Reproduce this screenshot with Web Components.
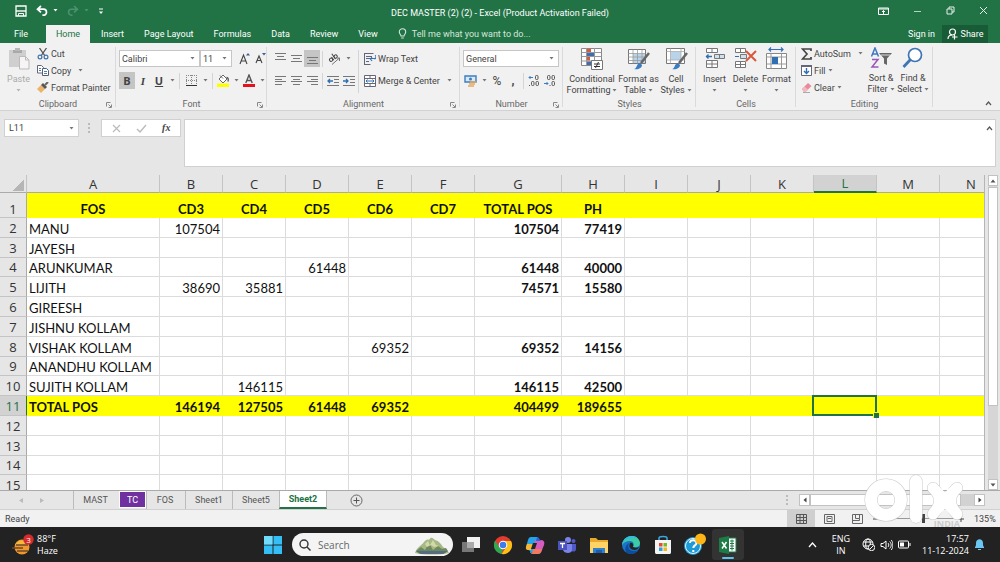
<!DOCTYPE html>
<html lang="en">
<head>
<meta charset="utf-8">
<title>DEC MASTER (2) (2) - Excel</title>
<style>
html,body{margin:0;height:100%}
body{font:9px/12px Roboto,"Open Sans",sans-serif;color:#444;background:#e6e6e6;overflow:hidden}
</style>
</head>
<body>
<excel-app></excel-app>
<script>
const BASE = `
*{box-sizing:border-box}
button,input,select{font:inherit;color:inherit;background:none;border:0;padding:0;margin:0;border-radius:0;outline:0}
button{display:flex;align-items:center;justify-content:center;white-space:nowrap}
select{appearance:none}
a{color:inherit;text-decoration:none}
`;
function define(name, css, html, setup) {
  const t = document.createElement('template');
  t.innerHTML = `<style>${BASE}${css}</style>${html}`;
  customElements.define(name, class extends HTMLElement {
    constructor() {
      super();
      this.attachShadow({mode: 'open'}).append(t.content.cloneNode(true));
    }
    connectedCallback() { if (setup) setup(this, this.shadowRoot); }
  });
}

/* name: [width, height, markup] */
const lines = (ys, a, b) => ys.map((y, i) => `<path d="M${i % 2 ? b : 0} ${y}.5h${i % 2 ? a : 11}" stroke="#777"/>`).join('');
const ICONS = {
  save: [12, 12, '<path d="M1 1h10v10H1z" fill="none" stroke="#fff" stroke-width="1.3"/><path d="M1 6h10" stroke="#fff" stroke-width="1.4"/><path d="M3.5 11V8.5h5V11" fill="none" stroke="#fff"/>'],
  undo: [12, 11, '<path d="M5 1L1.5 4.2 5 7.4M2 4.2h5.5a2.9 2.9 0 0 1 0 6H6.4" fill="none" stroke="#fff" stroke-width="1.7"/>'],
  redo: [12, 11, '<path d="M7 1l3.5 3.2L7 7.4M10 4.2H4.5a2.9 2.9 0 0 0 0 6h1" fill="none" stroke="#4d9270" stroke-width="1.5"/>'],
  custom: [6, 8, '<path d="M1 2h4" stroke="#fff"/><path d="M1 4.5h4L3 7z" fill="#fff"/>'],
  arrow: [5, 3, '<path d="M.5 0h4L2.500 2.500z" fill="#777"/>'],
  arrowPale: [5, 3, '<path d="M.5 0h4L2.500 2.500z" fill="#b5b5b5"/>'],
  arrowWhite: [5, 3, '<path d="M.5 0h4L2.500 2.500z" fill="#fff"/>'],
  arrowDim: [5, 3, '<path d="M.5 0h4L2.500 2.500z" fill="#4d9270"/>'],
  display: [11, 8, '<path d="M.5 1h10v6.500H.5zM.5 2h10M5.500 7V3.500M4 5l1.500-1.500L7 5" fill="none" stroke="#fff"/>'],
  min: [9, 8, '<path d="M1 4.500h7" stroke="#b5d3c2"/>'],
  restore: [9, 9, '<path d="M1 3h5v5H1zM3 3V1h5v5H6" fill="none" stroke="#e5f0ea"/>'],
  close: [9, 9, '<path d="M1 1l7 7M8 1L1 8" stroke="#e5f0ea"/>'],
  bulb: [9, 12, '<path d="M3 8C3 6.800 1.300 6 1.300 4a3.200 3.200 0 0 1 6.400 0C7.700 6 6 6.800 6 8zM3.200 10h2.600" fill="none" stroke="#d5e6dc" stroke-width="1.100"/>'],
  person: [11, 12, '<circle cx="5.500" cy="4" r="3" fill="none" stroke="#fff" stroke-width="1.200"/><path d="M1 11c0-3 2-4 4-4M7.500 6.500v5M5 9h5.500" fill="none" stroke="#fff" stroke-width="1.200"/>'],
  paste: [22, 23, '<path d="M1 3h17v17H1z" fill="#cfcfcf"/><path d="M5 3h9v3H5z" fill="#a9a9a9"/><path d="M7 1h5v3H7z" fill="#b9b9b9"/><path d="M11.500 9.500h6l3.500 3.500v9h-9.500z" fill="#f6f4f4" stroke="#bbb"/><path d="M17.500 9.500V13H21" fill="none" stroke="#bbb"/>'],
  cut: [12, 12, '<path d="M2.500 0L8 8M9.500 0L4 8" stroke="#555" stroke-width="1.300"/><circle cx="3" cy="9" r="1.900" fill="none" stroke="#4274b0" stroke-width="1.200"/><circle cx="9" cy="9" r="1.900" fill="none" stroke="#4274b0" stroke-width="1.200"/>'],
  copy: [12, 11, '<path d="M.5.5h4L6.500 2.500V8H.5z" fill="#fff" stroke="#667"/><path d="M5.500 3.500h4l2 2v5h-6z" fill="#fff" stroke="#555c77"/><path d="M7 6.500h3M7 8.500h3M2 3.500h2M2 5.500h2" stroke="#4a7ebb"/>'],
  painter: [12, 11, '<path d="M0 7l4-4 4 4-4 4z" fill="#edb469"/><path d="M4 3l2-2 4 4-2 2z" fill="#555"/><path d="M8 3l3-3" stroke="#666" stroke-width="2"/>'],
  launcher: [6, 6, '<path d="M.5 4.500v-4h4M2.500 2.500L5 5M5.500 2.500v3h-3" fill="none" stroke="#888"/>'],
  bigger: [11, 12, '<path d="M1 11L4.500 2 8 11M2.300 8h4.400" fill="none" stroke="#444" stroke-width="1.100"/><path d="M7 2.500h4L9 0z" fill="#3c5f8f"/>'],
  smaller: [11, 11, '<path d="M1 10l3-7 3 7M2.300 7.500h3.400" fill="none" stroke="#444" stroke-width="1.100"/><path d="M7 0h4L9 2.500z" fill="#3c5f8f"/>'],
  borders: [11, 11, '<path d="M.5 0v10M5.500 0v10M10.500 0v10M0 .5h11M0 5.500h11" stroke="#888" stroke-dasharray="1 1"/><path d="M0 10.500h11" stroke="#333"/>'],
  fill: [13, 13, '<path d="M2 5l4-4 4 4-4 4z" fill="#fff" stroke="#666"/><path d="M3 1.500l3 3" stroke="#666"/><path d="M9.500 3.500c2 0 2 2 1.500 4" stroke="#555" stroke-width="1.300" fill="none"/><path d="M0 9.500h12V13H0z" fill="#ff0"/>'],
  fontColor: [12, 13, '<path d="M2.800 9L6 1l3.200 8M3.800 6.500h4.400" fill="none" stroke="#555" stroke-width="1.400"/><path d="M0 10h12v3H0z" fill="#e8101c"/>'],
  top: [11, 11, lines([0, 3, 6], 7, 2)],
  mid: [11, 9, lines([1, 4, 7], 7, 2)],
  bottom: [11, 11, lines([4, 7, 10], 7, 2)],
  alignLeft: [11, 9, lines([0, 3, 5, 8], 7, 0)],
  alignCenter: [11, 9, lines([0, 3, 5, 8], 7, 2)],
  alignRight: [11, 9, lines([0, 3, 5, 8], 7, 4)],
  orient: [13, 12, '<g transform="rotate(-35 5 6)" fill="none" stroke="#444"><circle cx="3" cy="5.500" r="1.600"/><path d="M5 3.500v4M7 1v6.500"/><circle cx="8.600" cy="5.500" r="1.600"/></g><path d="M4 11.500L11.500 5M11.500 8V5H8.500" stroke="#777" fill="none"/>'],
  outdent: [12, 10, '<path d="M0 .5h12M7 3.500h5M7 6.500h5M0 9.500h12" stroke="#777"/><path d="M6 5H1M3 3L1 5l2 2" fill="none" stroke="#2f6fb3" stroke-width="1.300"/>'],
  indent: [12, 10, '<path d="M0 .5h12M7 3.500h5M7 6.500h5M0 9.500h12" stroke="#777"/><path d="M0 5h5M3 3l2 2-2 2" fill="none" stroke="#2f6fb3" stroke-width="1.300"/>'],
  wrap: [12, 12, '<path d="M.5 0v12M.5.5h9M.5 11.500h6M2 3.500h6M2 8.500h3" fill="none" stroke="#667"/><path d="M2 5.500h8a1.500 1.500 0 0 0 1-3M8 4L6.500 6 8 8" fill="none" stroke="#3c6fb0" stroke-width="1.200"/>'],
  merge: [12, 12, '<path d="M.5.5h11v11H.5zM.5 3.500h11M.5 8.500h11M6 .5v3M6 8.500v3" fill="#fff" stroke="#667"/><path d="M2 6h8M3.500 4.500L2 6l1.500 1.500M8.500 4.500L10 6 8.500 7.500" fill="none" stroke="#2f6fb3"/>'],
  money: [14, 12, '<path d="M1 1h11v6H1z" fill="#d8e8f5" stroke="#3b7dc0" stroke-width="1.400"/><circle cx="6.500" cy="4" r="1.500" fill="#3b7dc0"/><path d="M6 7h6M5 9h6M4 11h6" stroke="#e8a860" stroke-width="1.500"/>'],
  incDec: [12, 12, '<path d="M5 2.500H1M2.500 1L1 2.500 2.500 4" fill="none" stroke="#3b7dc0"/><g fill="none" stroke="#555"><rect x="7.500" y=".5" width="2.500" height="4" rx="1"/><rect x="3.500" y="6.500" width="2.500" height="4" rx="1"/><rect x="8" y="6.500" width="2.500" height="4" rx="1"/></g><path d="M1 10.500h1" stroke="#555"/>'],
  decDec: [12, 12, '<path d="M0 8.500h4M2.500 7L4 8.500 2.500 10" fill="none" stroke="#3b7dc0"/><g fill="none" stroke="#555"><rect x="3.500" y=".5" width="2.500" height="4" rx="1"/><rect x="8" y=".5" width="2.500" height="4" rx="1"/><rect x="8" y="6.500" width="2.500" height="4" rx="1"/></g><path d="M5.500 10.500h1" stroke="#555"/>'],
  cond: [22, 23, '<path d="M.5 1.500h20v17H.5z" fill="#fff" stroke="#888"/><path d="M.5 5.500h20M.5 9.500h20M.5 14h20M5.500 1v17M13.500 1v17" stroke="#999"/><path d="M6 2h4v3H6zM6 10h3v3.500H6z" fill="#d9593d"/><path d="M6 6h7v3H6zM6 14.500h5v3.500H6z" fill="#3c6fb0"/><path d="M10.500 13.500h11v9h-11z" fill="#fff" stroke="#777"/><path d="M13 17h6M13 19.500h6M17.500 15l-3 6" stroke="#333"/>'],
  formatTable: [23, 23, '<path d="M1.500 2.500h17v14h-17z" fill="#fff" stroke="#777"/><path d="M6 7h12v9H6z" fill="#b9d4ea"/><path d="M1.500 6.500h17M1.500 10h17M1.500 13.500h17M6 2.500v14M10.500 2.500v14M15 2.500v14" stroke="#999" stroke-width=".8"/><path d="M22 6l-8 10" stroke="#666" stroke-width="2.500"/><path d="M7 22c3 0 2-5 6-6l2 2c0 3-4 5-8 4z" fill="#3b7dc0"/>'],
  cellStyles: [23, 23, '<path d="M1.500 1.500h18v15h-18z" fill="#fff" stroke="#777"/><path d="M6 5h10v8H6z" fill="#b9d4ea"/><path d="M1.500 4.500h18M1.500 13h18M5.500 1.500v15M16 1.500v15" stroke="#aaa" stroke-width=".8"/><path d="M22 6l-8 10" stroke="#666" stroke-width="2.500"/><path d="M7 22c3 0 2-5 6-6l2 2c0 3-4 5-8 4z" fill="#3b7dc0"/>'],
  insertCells: [20, 23, '<path d="M1.500 1.500h11v4h-11zM7 1.500v4M1.500 13.500h11v7h-11zM1.500 17h11M7 13.500v7" fill="#fff" stroke="#777"/><path d="M9.500 7.500h10v4h-10zM14.500 7.500v4" fill="#cfe0ee" stroke="#777"/><path d="M7 9.500H1M3.500 7.500l-2 2 2 2" fill="none" stroke="#2f6fb3" stroke-width="1.400"/>'],
  deleteCells: [23, 23, '<path d="M1.500 1.500h10v4h-10zM6.500 1.500v4M1.500 14.500h10v6h-10zM1.500 17.500h10M6.500 14.500v6" fill="#fff" stroke="#777"/><path d="M6.500 7.500h6v4h-6z" fill="#cfe0ee" stroke="#777"/><path d="M5 9.500H1" stroke="#2f6fb3"/><path d="M12 4l10 10M22 4L12 14" stroke="#d9593d" stroke-width="2"/>'],
  formatCells: [23, 23, '<path d="M4 2.500h14M6 .500L4 2.500l2 2M16 .500l2 2-2 2" fill="none" stroke="#2f6fb3" stroke-width="1.200"/><path d="M1.500 6.500h20v15h-20z" fill="#fff" stroke="#888"/><path d="M1.500 10h20M1.500 17h20M6 6.500v15M16.500 6.500v15" stroke="#999"/><path d="M7 10h6v7H7z" fill="#2f6fb3"/>'],
  sum: [11, 12, '<path d="M10 3V1H1.500L6 6l-4.500 5H10V9" fill="none" stroke="#444" stroke-width="1.700"/>'],
  fillDown: [11, 11, '<path d="M.5.5h10v10H.5z" fill="#fff" stroke="#667"/><path d="M0 0h11v2H0z" fill="#667"/><path d="M5.500 3v5.500M3 6l2.500 2.500L8 6" fill="none" stroke="#2f6fb3" stroke-width="1.400"/>'],
  eraser: [11, 11, '<path d="M1 7l6-6 3.500 3L5 9.500H2.500z" fill="#e98a9a"/><path d="M1 7l2.500-2.500L7 7.500 5 9.500H2.500z" fill="#f3b7c0"/><path d="M2 10.500h7" stroke="#aaa"/>'],
  sort: [22, 22, '<path d="M1.500 9.500L5 1l3.500 8.500M2.700 7h4.600" fill="none" stroke="#3c78bf" stroke-width="1.500"/><path d="M2 12.500h6L2 20h6.500" fill="none" stroke="#9a55b8" stroke-width="1.500"/><path d="M9 6h13l-5 5.500V18l-3-1.500v-5z" fill="#666"/><path d="M11 8h9" stroke="#ddd"/>'],
  find: [22, 22, '<circle cx="13" cy="8" r="6.500" fill="#fff" stroke="#3f74b5" stroke-width="1.700"/><path d="M8.500 12.500L1.500 20" stroke="#3f74b5" stroke-width="2.800"/>'],
  up: [7, 5, '<path d="M1 4l2.500-3L6 4" fill="none" stroke="#555" stroke-width="1.200"/>'],
  cancel: [9, 9, '<path d="M1 1l7 7M8 1L1 8" stroke="#bbb" stroke-width="1.200"/>'],
  check: [11, 9, '<path d="M1 5l3 3 6-7" fill="none" stroke="#bbb" stroke-width="1.400"/>'],
  dots: [2, 10, '<path d="M0 0h2v2H0zM0 4h2v2H0zM0 8h2v2H0z" fill="#bbb"/>'],
  prev: [4, 5, '<path d="M4 0v5L0 2.500z" fill="#bbb"/>'],
  next: [4, 5, '<path d="M0 0v5l4-2.500z" fill="#bbb"/>'],
  sLeft: [4, 6, '<path d="M3.500 .5v5L.5 3z" fill="#444"/>'],
  sRight: [4, 6, '<path d="M.5 .5v5l3-2.500z" fill="#444"/>'],
  sUp: [6, 4, '<path d="M.5 3.500h5L3 .5z" fill="#555"/>'],
  sDown: [6, 4, '<path d="M.5 .5h5L3 3.500z" fill="#555"/>'],
  plus: [13, 13, '<circle cx="6.500" cy="6.500" r="5.500" fill="none" stroke="#666"/><path d="M6.500 3.500v6M3.500 6.500h6" stroke="#555"/>'],
  viewNormal: [11, 10, '<path d="M.5.5h10v9H.5zM.5 3.500h10M.5 6.500h10M4 .5v9M7.500.5v9" fill="none" stroke="#555"/>'],
  viewPage: [11, 10, '<path d="M.5.5h10v9H.5zM3 2.500h5v5H3zM4 4.500h3" fill="none" stroke="#666"/>'],
  viewBreak: [11, 10, '<path d="M.5.5h10v9H.5zM3.500.5v4h4v-4M.5 6.500h7v-2" fill="none" stroke="#666"/>'],
  weather: [22, 22, '<circle cx="10" cy="13" r="7.500" fill="#f0982d"/><path d="M3 11c3-6 11-6 14 0" fill="#f7b93c"/><path d="M0 14h11M4 11h12M5 17h11" stroke="#6b4a2a" stroke-width="1.300"/><circle cx="16.500" cy="5.500" r="5.200" fill="#d42c2c"/><text x="16.500" y="8.500" font-size="8" fill="#fff" text-anchor="middle">3</text>'],
  windows: [18, 18, '<path d="M0 0h8.500v8.500H0zM9.500 0H18v8.500H9.500zM0 9.500h8.500V18H0zM9.500 9.500H18V18H9.500z" fill="#35bdf5"/><path d="M0 0h8.500v8.500H0z" fill="#6fdcfb"/>'],
  search: [12, 12, '<circle cx="5" cy="5" r="4" fill="none" stroke="#333" stroke-width="1.400"/><path d="M8 8l3.500 3.500" stroke="#333" stroke-width="1.400"/>'],
  hill: [36, 20, '<path d="M1 18C3 12 7 11 10 7c2-2 3-3 5-2 2-4 4-2 6 0 4 1 6 4 8 7 3 2 5 4 6 6-9 2-25 2-34 0z" fill="#a5b886"/><path d="M2 16l5-4 4 3 4-7 4 7 5-4 4 3 4-1 2 3-5 3H6z" fill="#6c8a5e"/><path d="M11 9l3-3 2 4 3-5 3 5 3 1-5 1-3-2-4 2z" fill="#d3d9a6"/><path d="M2 16h32l-5 3H7z" fill="#566a80"/>'],
  taskview: [20, 20, '<path d="M1 7h12v10H1z" fill="#777"/><path d="M6 2h13v11H6z" fill="#f1f1f1"/><path d="M6 7h7v6H6z" fill="#aaa"/>'],
  chrome: [20, 20, '<circle cx="10" cy="10" r="9" fill="#e33b2e"/><path d="M2.200 5.500L6.100 12.200 10 14.500 8.500 19A9 9 0 0 1 2.200 5.500z" fill="#2da94f"/><path d="M10 6h8a9 9 0 0 1-9.500 13l5-7z" fill="#fbc116"/><circle cx="10" cy="10" r="4.300" fill="#fff"/><circle cx="10" cy="10" r="3.300" fill="#3b7ded"/>'],
  copilot: [20, 20, '<path d="M6 2h7l-4 13c-1 3-3 3-4 3 2-4-5-2-4-6l2-7c.5-2 1.500-3 3-3z" fill="#25a5e8"/><path d="M2 9l-1 3c-1 4 4 3 5 3l2-6z" fill="#f5b638"/><path d="M10 5h5c4 0 5 2 4 5l-2 5c-1 3-2 4-4 4H6c3-1 3-3 4-6z" fill="#d65cc0"/><path d="M12 2c3 0 2 4 5 4h-6z" fill="#2467d8"/><path d="M8 14h9c-1 4-2 5-5 5H6c1-1 2-3 2-5z" fill="#f17a5c"/><path d="M8 8h4l-2 6H6z" fill="#242424"/>'],
  teams: [20, 20, '<circle cx="11" cy="5" r="3" fill="#7b83eb"/><circle cx="16.500" cy="6" r="2" fill="#5059c9"/><path d="M13 9h6v5c0 3-3 3-5 2z" fill="#5059c9"/><path d="M6 9h9v6c0 4-8 4-9 0z" fill="#7b83eb"/><path d="M1 6h9v9H1z" fill="#4b53bc"/><path d="M3 8.500h5M5.500 8.500V13" stroke="#fff" stroke-width="1.300"/>'],
  folder: [20, 20, '<path d="M1 3h6l2 2h10v13H1z" fill="#e9a92b"/><path d="M1 7h18v11H1z" fill="#fcd364"/><path d="M4 13h12v5H4z" fill="#2f7fd0"/><path d="M7 15h6v3H7z" fill="#1b5faa"/>'],
  edge: [20, 20, '<circle cx="10" cy="10" r="9" fill="#1b74c9"/><path d="M1 10C2 3 7 1 11 1c5 0 8 4 8 7 0 4-4 5-7 4 2-3 0-6-3-6-4 0-7 2-8 4z" fill="#3ccba3"/><path d="M1 10C2 4 7 1 11 1c3 0 5 1 6 3C12 2 4 3 1 10z" fill="#35b9e6"/><path d="M8 8c-2 4 0 8 5 8 2 0 4-1 5-2-3 5-8 6-12 4-3-2-2-8 2-10z" fill="#0d4c9b"/><path d="M9 8c2-1 4 1 3 4 2 1 4 1 6 0-1 3-5 4-8 2-2-1-2-4-1-6z" fill="#242424"/>'],
  store: [20, 20, '<path d="M6 5V3c0-2 8-2 8 0v2" fill="none" stroke="#3aa9e0" stroke-width="1.500"/><path d="M2 5h16v12c0 2-1 2-2 2H4c-1 0-2 0-2-2z" fill="#f4f4f4"/><path d="M6 8h3.500v3.500H6z" fill="#e64b2d"/><path d="M10.500 8H14v3.500h-3.500z" fill="#79b928"/><path d="M6 12.500h3.500V16H6z" fill="#2c9fe3"/><path d="M10.500 12.500H14V16h-3.500z" fill="#f5b71c"/>'],
  help: [24, 24, '<circle cx="10" cy="13" r="9" fill="#1d9bd6"/><circle cx="10" cy="13" r="7.500" fill="none" stroke="#e5f4fb"/><path d="M7 10c0-4 6.500-3.500 6.500 0 0 2.500-3.200 2.300-3.200 5M10.300 17v2" fill="none" stroke="#fff" stroke-width="2"/><circle cx="17.500" cy="6" r="5.500" fill="#fcb516"/>'],
  excel: [20, 20, '<path d="M9 3h9v14H9z" fill="#fff" stroke="#1d7c45"/><path d="M12 6h4M12 8.500h4M12 11h4M12 13.500h4M14 4.500v11" stroke="#1d7c45"/><path d="M1 3l10-2v18L1 17z" fill="#1d7c45"/><path d="M4 7l4.500 6.500M8.500 7L4 13.500" stroke="#fff" stroke-width="1.500"/>'],
  chevron: [9, 6, '<path d="M1 5l3.500-4L8 5" fill="none" stroke="#fff" stroke-width="1.300"/>'],
  globe: [13, 13, '<circle cx="6" cy="6" r="5" fill="none" stroke="#fff"/><ellipse cx="6" cy="6" rx="2.300" ry="5" fill="none" stroke="#fff"/><path d="M1.500 4h9M1.500 8h9" stroke="#fff"/><circle cx="9.500" cy="9.500" r="3.200" fill="#242424" stroke="#fff"/><path d="M7.500 11.500l4-4" stroke="#fff"/>'],
  speaker: [13, 12, '<path d="M1 4.500h2L6 2v8L3 7.500H1z" fill="none" stroke="#fff"/><path d="M8 4c1 1 1 3 0 4M9.700 2.500c2 2 2 5 0 7M11.300 1c2 3 2 7 0 10" fill="none" stroke="#fff" stroke-width=".9"/>'],
  battery: [13, 9, '<rect x=".5" y="1" width="10" height="7" rx="1" fill="none" stroke="#fff"/><path d="M2 2.500h4v4H2zM11.500 3h1v3h-1z" fill="#fff"/>'],
  bell: [11, 13, '<path d="M1 9c1-1 1-2 1-4 0-5 7-5 7 0 0 2 0 3 1 4v1H1z" fill="#6cc6f2"/><path d="M4 11h3v1H4z" fill="#6cc6f2"/>'],
  olx: [102, 54, '<g fill="none" stroke-linecap="round"><g stroke="#c8c8c8" stroke-width="13"><circle cx="22" cy="26" r="15"/><path d="M52 7v36"/><path d="M69 14Q82 26 69 40M93 14Q80 26 93 40" stroke-width="12"/></g><g stroke="#fff"><circle cx="22" cy="26" r="15" stroke-width="12"/><path d="M52 7v36" stroke-width="12"/><path d="M69 14Q82 27 93 40M93 14Q80 27 69 40M69 14Q82 26 69 40M93 14Q80 26 93 40" stroke-width="11"/></g></g>'],
};
customElements.define('x-icon', class extends HTMLElement {
  connectedCallback() {
    if (this.shadowRoot) return;
    const [w, h, m] = ICONS[this.getAttribute('name')];
    this.attachShadow({mode: 'open'}).innerHTML =
      `<style>:host{display:block;flex:none;width:${w}px;height:${h}px}svg{display:block}</style><svg width="${w}" height="${h}" viewBox="0 0 ${w} ${h}" aria-hidden="true">${m}</svg>`;
  }
});
const ic = n => `<x-icon name="${n}"></x-icon>`;

define('title-bar', `
:host{display:grid;grid-template-columns:1fr auto 1fr;align-items:center;height:25px;background:#217346;color:#fff}
.l,.r{display:flex;align-items:center;height:21px;align-self:start}
.l{gap:5px;padding-left:15px}.l .n{margin-left:4px}
.r{justify-content:flex-end;gap:24px;padding-right:12px}
`, `<div class="l"><button aria-label="Save">${ic('save')}</button><button class="n" aria-label="Undo">${ic('undo')}</button>${ic('arrowWhite')}<button class="n" aria-label="Redo">${ic('redo')}</button>${ic('arrowDim')}<button class="n" aria-label="Customize">${ic('custom')}</button></div>
<span>DEC MASTER (2) (2) - Excel (Product Activation Failed)</span>
<div class="r"><button aria-label="Ribbon display">${ic('display')}</button><button aria-label="Minimize">${ic('min')}</button><button aria-label="Restore">${ic('restore')}</button><button aria-label="Close">${ic('close')}</button></div>`);

define('ribbon-tabs', `
:host{display:flex;height:18px;background:#217346;color:#fff;align-items:stretch}
button{padding:0 10px}
.file{width:42px;margin-right:4px}
.on{background:#f1f1f1;color:#217346;width:44px;padding:0}
.home{margin-right:1px}
.tell{gap:5px;color:#d5e6dc}
.sign{margin-left:auto;padding:0 7px}
.share{background:#185c37;gap:3px;width:46px;padding:0;margin-right:12px}
`, `<button class="file">File</button><button class="on home">Home</button><button>Insert</button><button>Page Layout</button><button>Formulas</button><button>Data</button><button>Review</button><button>View</button><button class="tell">${ic('bulb')}Tell me what you want to do...</button><button class="sign">Sign in</button><button class="share">${ic('person')}Share</button>`);

define('ribbon-group', `
:host{display:flex;flex-direction:column;flex:none;margin-top:2px;padding:0 3px;background:linear-gradient(#dadada,#dadada) right 2px/1px 60px no-repeat}
.b{height:52px;display:flex}
.f{display:flex;height:13px;align-items:center;justify-content:center;position:relative;color:#666}
.f x-icon{position:absolute;right:1px;bottom:2px}
:host([plain]) .f x-icon{display:none}
`, `<div class="b"><slot></slot></div><div class="f"><span></span>${ic('launcher')}</div>`,
(el, r) => { r.querySelector('span').textContent = el.getAttribute('label'); });

define('big-button', `
:host{display:block}
button{flex-direction:column;justify-content:flex-start;width:100%;line-height:11px;gap:4px;padding-top:2px}
.t{display:flex;flex-direction:column;align-items:center}
.t span{display:flex;align-items:center;gap:2px;height:11px}
`, `<button><slot name="icon"></slot><span class="t"><span class="a"></span><span class="c"></span></span></button>`,
(el, r) => {
  r.querySelector('.a').textContent = el.getAttribute('first');
  r.querySelector('.c').innerHTML = (el.getAttribute('second') || '') + ic(el.hasAttribute('pale') ? 'arrowPale' : 'arrow');
});
const big = (n, a, b, w, extra = '') => `<big-button style="width:${w}px" first="${a}" ${b ? `second="${b}"` : ''} ${extra}><x-icon slot="icon" name="${n}"></x-icon></big-button>`;

define('ribbon-bar', `
:host{display:flex;height:68px;background:#f1f1f1;border-bottom:1px solid #d2d2d2}
ribbon-group.clip{width:116px}.font{width:151px}.align{width:193px}.num{width:103px}.styles{width:133px}.cells{width:100px}.edit{width:137px}
.stack{display:flex;flex-direction:column}
.stack button{height:17px;gap:2px;justify-content:flex-start}
.rows{display:flex;flex-direction:column;gap:5px;padding-top:5px}
.row{display:flex;align-items:center;height:17px}
.row button,.i{width:16px;height:17px}
.row .a{width:10px;display:flex;justify-content:center}
.row .s{width:1px;height:16px;background:#d4d4d4;margin:0 2px}
.row .txt{width:auto;gap:2px}
.row .biu{font-size:11px;font-family:"Open Sans",sans-serif}
.row .serif{font-family:"Liberation Serif",serif}
.dark{background:#c5c5c5}
label{display:grid;align-items:center;border:1px solid #c6c6c6;background:#fff;height:17px}
label>*{grid-area:1/1}label select{padding-left:2px;width:100%}
label x-icon{justify-self:end;margin-right:4px}
.fn{width:81px}.fs{width:32px;margin-right:4px}.nf{width:96px}
.row .z{width:18px}
.pale{color:#aaa}
.v{width:1px;background:#d4d4d4;margin:5px 5px 4px auto}
.pct{font-size:12px}
.collapse{margin:auto 8px 4px auto}
`, `
<ribbon-group class="clip" label="Clipboard">${big('paste', 'Paste', '', 31, 'pale class="pale"')}
<div class="stack" style="padding-left:3px"><button>${ic('cut')}Cut</button><button>${ic('copy')}Copy<x-icon name="arrow" style="margin-left:5px"></x-icon></button><button>${ic('painter')}Format Painter</button></div></ribbon-group>
<ribbon-group class="font" label="Font"><div class="rows">
<div class="row"><label class="fn"><select aria-label="Font"><option>Calibri</option></select>${ic('arrow')}</label><label class="fs"><select aria-label="Font size"><option>11</option></select>${ic('arrow')}</label><button aria-label="Increase font size">${ic('bigger')}</button><button aria-label="Decrease font size">${ic('smaller')}</button></div>
<div class="row"><button class="dark biu"><b>B</b></button><button class="biu serif"><b><i>I</i></b></button><button class="biu"><b><u>U</u></b></button><span class="a">${ic('arrow')}</span><span class="s"></span><button class="z" aria-label="Borders">${ic('borders')}</button><span class="a">${ic('arrow')}</span><span class="s"></span><button aria-label="Fill color">${ic('fill')}</button><span class="a">${ic('arrow')}</span><button aria-label="Font color">${ic('fontColor')}</button><span class="a">${ic('arrow')}</span></div>
</div></ribbon-group>
<ribbon-group class="align" label="Alignment"><div class="rows" style="padding-left:2px">
<div class="row"><button aria-label="Top">${ic('top')}</button><button aria-label="Middle">${ic('mid')}</button><button class="dark" aria-label="Bottom">${ic('bottom')}</button><span class="s"></span><button class="z" aria-label="Orientation">${ic('orient')}</button><span class="a">${ic('arrow')}</span></div>
<div class="row"><button aria-label="Left">${ic('alignLeft')}</button><button aria-label="Center">${ic('alignCenter')}</button><button aria-label="Right">${ic('alignRight')}</button><span class="s"></span><button aria-label="Decrease indent">${ic('outdent')}</button><button aria-label="Increase indent">${ic('indent')}</button></div></div>
<span class="v"></span><div class="rows" style="width:93px"><div class="row"><button class="txt">${ic('wrap')}Wrap Text</button></div><div class="row"><button class="txt">${ic('merge')}Merge &amp; Center<x-icon name="arrow" style="margin-left:5px"></x-icon></button></div></div></ribbon-group>
<ribbon-group class="num" label="Number"><div class="rows"><div class="row"><label class="nf"><select aria-label="Number format"><option>General</option></select>${ic('arrow')}</label></div>
<div class="row"><button aria-label="Accounting">${ic('money')}</button><span class="a">${ic('arrow')}</span><button class="pct">%</button><button class="pct"><b>,</b></button><span class="s"></span><button aria-label="Increase decimal">${ic('incDec')}</button><button aria-label="Decrease decimal">${ic('decDec')}</button></div></div></ribbon-group>
<ribbon-group class="styles" label="Styles" plain>${big('cond', 'Conditional', 'Formatting', 52)}${big('formatTable', 'Format as', 'Table', 41)}${big('cellStyles', 'Cell', 'Styles', 34)}</ribbon-group>
<ribbon-group class="cells" label="Cells" plain>${big('insertCells', 'Insert', '', 31)}${big('deleteCells', 'Delete', '', 31)}${big('formatCells', 'Format', '', 31)}</ribbon-group>
<ribbon-group class="edit" label="Editing" plain><div class="stack" style="width:66px;padding-left:2px"><button>${ic('sum')}AutoSum<x-icon name="arrow" style="margin-left:5px"></x-icon></button><button>${ic('fillDown')}Fill${ic('arrow')}</button><button>${ic('eraser')}Clear${ic('arrow')}</button></div>${big('sort', 'Sort &amp;', 'Filter', 32)}${big('find', 'Find &amp;', 'Select', 32)}</ribbon-group>
<button class="collapse" aria-label="Collapse ribbon">${ic('up')}</button>`);

define('formula-bar', `
:host{display:flex;align-items:flex-start;height:64px;padding:8px 4px 0;background:#e6e6e6}
.name,.fx{display:flex;align-items:center;height:18px;background:#fff;border:1px solid #d0d0d0}
.name{width:75px;padding:0 4px}.name input{flex:1;min-width:0}
.d{margin:4px 11px 0 9px}
.fx{width:80px;justify-content:space-around;padding:0 2px}
.fx i{font:italic bold 10px/14px "Liberation Serif",serif;color:#444}
.box{flex:1;display:flex;height:48px;margin-left:3px;background:#fff;border:1px solid #d0d0d0}
.box input{flex:1;height:17px}.box x-icon{margin:6px 2px}
`, `<div class="name"><input aria-label="Name box" value="L11">${ic('arrow')}</div><x-icon class="d" name="dots"></x-icon><div class="fx"><button aria-label="Cancel">${ic('cancel')}</button><button aria-label="Enter">${ic('check')}</button><button aria-label="Insert function"><i>fx</i></button></div><div class="box"><input aria-label="Formula">${ic('up')}</div>`);

const COLS = {A: 133, B: 63, C: 63, D: 63, E: 63, F: 63, G: 87, H: 63, I: 63, J: 63, K: 63, L: 63, M: 63, N: 63};
const DATA = [
  ['FOS', 'CD3', 'CD4', 'CD5', 'CD6', 'CD7', 'TOTAL POS', 'PH'],
  ['MANU', 107504, '', '', '', '', 107504, 77419],
  ['JAYESH'],
  ['ARUNKUMAR', '', '', 61448, '', '', 61448, 40000],
  ['LIJITH', 38690, 35881, '', '', '', 74571, 15580],
  ['GIREESH'],
  ['JISHNU KOLLAM'],
  ['VISHAK KOLLAM', '', '', '', 69352, '', 69352, 14156],
  ['ANANDHU KOLLAM'],
  ['SUJITH KOLLAM', '', 146115, '', '', '', 146115, 42500],
  ['TOTAL POS', 146194, 127505, 61448, 69352, '', 404499, 189655],
  [], [], [], []
];
define('sheet-grid', `
:host{display:block;overflow:hidden;background:#fff;border-right:1px solid #b5b5b5}
table{border-collapse:separate;border-spacing:0;table-layout:fixed;width:1003px;color:#111}
td,th{border:solid #dcdcdc;border-width:0 1px 1px 0;white-space:nowrap;overflow:hidden}
tr{height:20px}
tbody tr:nth-child(5n+4){height:19px}
tbody tr.head{height:25px}
td{padding:2px 2px 0;font:13px/16px Lato,sans-serif;text-align:right}
td:first-of-type{text-align:left}
th{font:13px/16px "Open Sans",sans-serif;text-align:center;background:#e6e6e6;color:#333;padding:0;border-color:#c4c4c4}
thead tr{height:18px}
thead th{border-bottom-color:#aaa}
thead th.sel{background:#d2d2d2;color:#217346;border-bottom:2px solid #217346;line-height:15px}
tbody th{border-right-color:#aaa}
tr.total th{background:#d2d2d2;color:#217346;border-right-color:#217346}
td:nth-of-type(7),td:nth-of-type(8){font-weight:700}
tr.head td,tr.total td{font-weight:700;background:#ff0;border-color:#ff0}
tr.head td{text-align:center;vertical-align:bottom}
tr.head th{vertical-align:bottom}
tr.total td.sel{position:relative;overflow:visible;border:0}
td.sel::before{content:"";position:absolute;inset:-1px 0 0 -2px;border:2px solid #217346}
td.sel::after{content:"";position:absolute;right:-2px;bottom:-2px;width:5px;height:5px;background:#217346;border:solid #ff0;border-width:1px 0 0 1px}
.corner{display:block;width:12px;height:12px;margin:2px 2px 0 auto;background:linear-gradient(135deg,transparent 50%,#b5b5b5 50%)}
`, `<table><colgroup></colgroup><thead></thead><tbody></tbody></table>`, (el, r) => {
  const names = Object.keys(COLS);
  r.querySelector('colgroup').innerHTML = '<col style="width:27px">' + names.map(n => `<col style="width:${COLS[n]}px">`).join('');
  r.querySelector('thead').innerHTML = '<tr><th><span class="corner"></span></th>' + names.map(n => `<th scope="col"${n === 'L' ? ' class="sel"' : ''}>${n}</th>`).join('') + '</tr>';
  r.querySelector('tbody').innerHTML = DATA.map((row, i) =>
    `<tr class="${i === 0 ? 'head' : i === 10 ? 'total' : ''}"><th scope="row">${i + 1}</th>` +
    names.map((n, c) => `<td${i === 10 && n === 'L' ? ' class="sel"' : ''}>${row[c] ?? ''}</td>`).join('') + '</tr>').join('');
});

define('v-scroll', `
:host{display:flex;flex-direction:column;width:15px;padding:0 2px 0 3px;background:#e6e6e6}
button{height:11px;background:#fff;border:1px solid #c2c2c2}
.t{flex:1;background:#d6d6d6;padding-top:1px;display:flex}
.t i{flex:1;height:75%;background:#fff;border:1px solid #c2c2c2}
`, `<button aria-label="Scroll up">${ic('sUp')}</button><div class="t"><i></i></div><button aria-label="Scroll down">${ic('sDown')}</button>`);

define('sheet-tabs', `
:host{display:flex;height:20px;background:#e6e6e6;border-top:1px solid #aaa;border-bottom:1px solid #d0d0d0;color:#555}
.nav{display:flex;gap:17px;align-items:center;width:73px;padding-left:19px}
.tab{border-left:1px solid #bbb;width:47px;height:18px}
.m{width:46px;padding-right:2px}.f{width:39px;padding-right:2px}
.tc{width:27px;background:#7030a0;color:#fff;border:1px solid #fff;height:17px}
.on{background:#fff;color:#217346;font-weight:700;border-bottom:2px solid #217346;border-right:1px solid #bbb;width:48px}
.add{margin-left:23px}
.h{margin-left:auto;display:flex;align-items:center;width:214px}
.h button{width:11px;height:12px;background:#fff;border:1px solid #c2c2c2}
.h x-icon[name=dots]{margin-right:11px}
.t{flex:1;height:12px;background:#d2d2d2;display:flex}
.t i{width:92%;background:#fff;border:1px solid #c2c2c2}
.h{padding-right:15px}
`, `<div class="nav"><button aria-label="Previous">${ic('prev')}</button><button aria-label="Next">${ic('next')}</button></div><button class="tab m">MAST</button><button class="tab tc">TC</button><button class="tab f">FOS</button><button class="tab">Sheet1</button><button class="tab">Sheet5</button><button class="tab on">Sheet2</button><button class="add" aria-label="New sheet">${ic('plus')}</button>
<div class="h">${ic('dots')}<button aria-label="Scroll left">${ic('sLeft')}</button><div class="t"><i></i></div><button aria-label="Scroll right">${ic('sRight')}</button></div>`);

define('status-bar', `
:host{display:flex;align-items:center;height:17px;background:#f1f1f1;padding:0 6px 0 5px}
.v{margin-left:auto;display:flex;align-self:stretch}
.v button{width:28px}.v .on{background:#cfcfcf}
.z{display:flex;align-items:center;gap:3px;width:91px;margin:0 10px 0 2px;color:#333}
input{appearance:none;flex:1;min-width:0;height:10px;background:linear-gradient(#999,#999) center/100% 1px no-repeat}
input::-webkit-slider-thumb{appearance:none;width:3px;height:9px;background:#444}
.p{width:20px}
`, `<span>Ready</span><div class="v"><button class="on" aria-label="Normal">${ic('viewNormal')}</button><button aria-label="Page layout">${ic('viewPage')}</button><button aria-label="Page break">${ic('viewBreak')}</button></div><div class="z"><button aria-label="Zoom out"><svg width="6" height="6"><path d="M0 3h6" stroke="#444"/></svg></button><input type="range" aria-label="Zoom" value="57"><button aria-label="Zoom in"><svg width="6" height="6"><path d="M0 3h6M3 0v6" stroke="#444"/></svg></button></div><span class="p">135%</span>`);

define('win-taskbar', `
:host{display:grid;grid-template-columns:257px auto 1fr;align-items:center;height:35px;background:#222;color:#fff;font-family:"Open Sans",sans-serif}
.w{display:flex;align-items:center;gap:3px;padding-left:12px;text-align:left}
.c{display:flex;align-items:center}
.c button{width:32px;height:31px}
.s{display:flex;align-items:center;width:161px;height:23px;margin:0 2px 0 3px;border-radius:12px;background:#f4f4f4;color:#555;padding:0 3px 0 7px;gap:7px;font-size:10px}
.s input{flex:1;min-width:0}.s input::placeholder{color:#666;opacity:1}
.c .on{background:#333;border-radius:3px;flex-direction:column;position:relative;margin-left:1px}
.on::after{content:"";position:absolute;bottom:1px;width:12px;height:2px;border-radius:1px;background:#5cc3ef}
.r{display:flex;align-items:center;justify-content:flex-end;padding-right:15px}
.lang{text-align:center;margin:0 12px 0 15px}
.n{display:flex;gap:5px;align-items:center}
.clock{text-align:right;margin:0 5px 0 11px;width:47px;white-space:nowrap;display:flex;flex-direction:column;align-items:flex-end}
`, `<div class="w">${ic('weather')}<span>88°F<br>Haze</span></div>
<div class="c"><button aria-label="Start">${ic('windows')}</button><label class="s">${ic('search')}<input placeholder="Search" aria-label="Search">${ic('hill')}</label>${['taskview', 'chrome', 'copilot', 'teams', 'folder', 'edge', 'store', 'help'].map(n => `<button aria-label="${n}">${ic(n)}</button>`).join('')}<button class="on" aria-label="Excel">${ic('excel')}</button></div>
<div class="r"><button aria-label="Hidden icons">${ic('chevron')}</button><span class="lang">ENG<br>IN</span><span class="n">${ic('globe')}${ic('speaker')}${ic('battery')}</span><span class="clock"><span>17:57</span><span>11-12-2024</span></span>${ic('bell')}</div>`);

define('olx-mark', `
:host{position:absolute;right:34px;bottom:34px;width:102px;height:54px;pointer-events:none}
x-icon{position:absolute;left:0;top:0}
span{position:absolute;right:6px;bottom:0;font:bold 9px/9px "Open Sans",sans-serif;color:#ccc}
`, `${ic('olx')}<span>INDIA</span>`);

define('excel-app', `
:host{display:flex;flex-direction:column;height:100vh;position:relative}
.main{flex:1;display:flex;min-height:0}
sheet-grid{flex:1;min-width:0}
`, `<title-bar></title-bar><ribbon-tabs></ribbon-tabs><ribbon-bar></ribbon-bar><formula-bar></formula-bar><div class="main"><sheet-grid></sheet-grid><v-scroll></v-scroll></div><sheet-tabs></sheet-tabs><status-bar></status-bar><win-taskbar></win-taskbar><olx-mark></olx-mark>`);
</script>
</body>
</html>
